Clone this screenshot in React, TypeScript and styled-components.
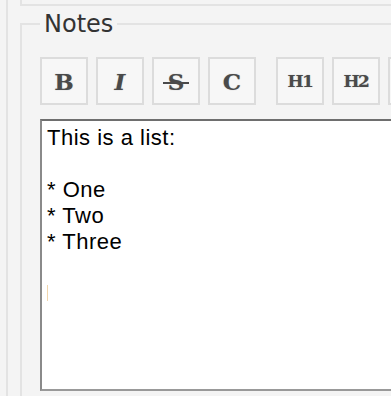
import styled, { createGlobalStyle } from "styled-components";

const GlobalStyle = createGlobalStyle`
  body {
    margin: 0;
    background: #f4f4f4;
    overflow: hidden;
  }
`;

const Panel = styled.div`
  margin-left: 6px;
  padding-left: 12px;
  border-left: 2px solid #e3e3e3;
  width: 640px;
  min-height: 396px;
`;

const PrevFieldsetEnd = styled.div`
  height: 4px;
  border: 2px solid #e3e3e3;
  border-top: none;
`;

const Fieldset = styled.fieldset`
  margin: 4px 0 0;
  padding: 0 18px 20px;
  border: 2px solid #e3e3e3;
  min-width: 0;
`;

const Legend = styled.legend`
  margin-top: -1px;
  padding: 0 4px;
  font-family: "DejaVu Sans", Verdana, sans-serif;
  font-size: 24px;
  line-height: 28px;
  color: #333;
`;

const Toolbar = styled.div`
  display: flex;
  gap: 8px;
  margin-top: 19px;
`;

const ToolButton = styled.button<{ $groupStart?: boolean; $small?: boolean; $italic?: boolean }>`
  width: 48px;
  height: 48px;
  flex: none;
  margin-left: ${({ $groupStart }) => ($groupStart ? "12px" : "0")};
  padding: 0;
  display: flex;
  align-items: center;
  justify-content: center;
  background: #f7f7f7;
  border: 2px solid #dcdcdc;
  font-family: "DejaVu Serif", "Liberation Serif", serif;
  font-weight: bold;
  font-style: ${({ $italic }) => ($italic ? "italic" : "normal")};
  font-size: ${({ $small }) => ($small ? "17px" : "23px")};
  letter-spacing: ${({ $small }) => ($small ? "-1.5px" : "0")};
  color: #4a4a4a;
  text-shadow: 0 0 1px rgba(60, 60, 60, 0.45);
`;

const Strike = styled.span`
  position: relative;
  &::after {
    content: "";
    position: absolute;
    left: -5px;
    right: -5px;
    top: 52%;
    height: 2px;
    background: #4a4a4a;
  }
`;

const Editor = styled.div`
  margin-top: 14px;
  height: 272px;
  box-sizing: border-box;
  padding: 4px 5px;
  background: #fff;
  border: 2px solid #999;
  border-top-color: #6e6e6e;
  border-left-color: #8a8a8a;
  font-family: "Liberation Sans", Arial, sans-serif;
  font-size: 22px;
  letter-spacing: 0.5px;
  line-height: 26px;
  color: #000;
  white-space: pre-wrap;
`;

const Caret = styled.span`
  display: inline-block;
  width: 1px;
  height: 16px;
  background: #f1d6ad;
`;

const noteText = "This is a list:\n\n* One\n* Two\n* Three\n\n";

export default function App() {
  return (
    <>
      <GlobalStyle />
      <Panel>
        <PrevFieldsetEnd />
        <Fieldset>
          <Legend>Notes</Legend>
          <Toolbar>
            <ToolButton title="Bold">B</ToolButton>
            <ToolButton title="Italic" $italic>I</ToolButton>
            <ToolButton title="Strikethrough">
              <Strike>S</Strike>
            </ToolButton>
            <ToolButton title="Code">C</ToolButton>
            <ToolButton title="Heading 1" $groupStart $small>H1</ToolButton>
            <ToolButton title="Heading 2" $small>H2</ToolButton>
            <ToolButton title="Heading 3" $small>H3</ToolButton>
          </Toolbar>
          <Editor>
            {noteText}
            <Caret />
          </Editor>
        </Fieldset>
      </Panel>
    </>
  );
}
